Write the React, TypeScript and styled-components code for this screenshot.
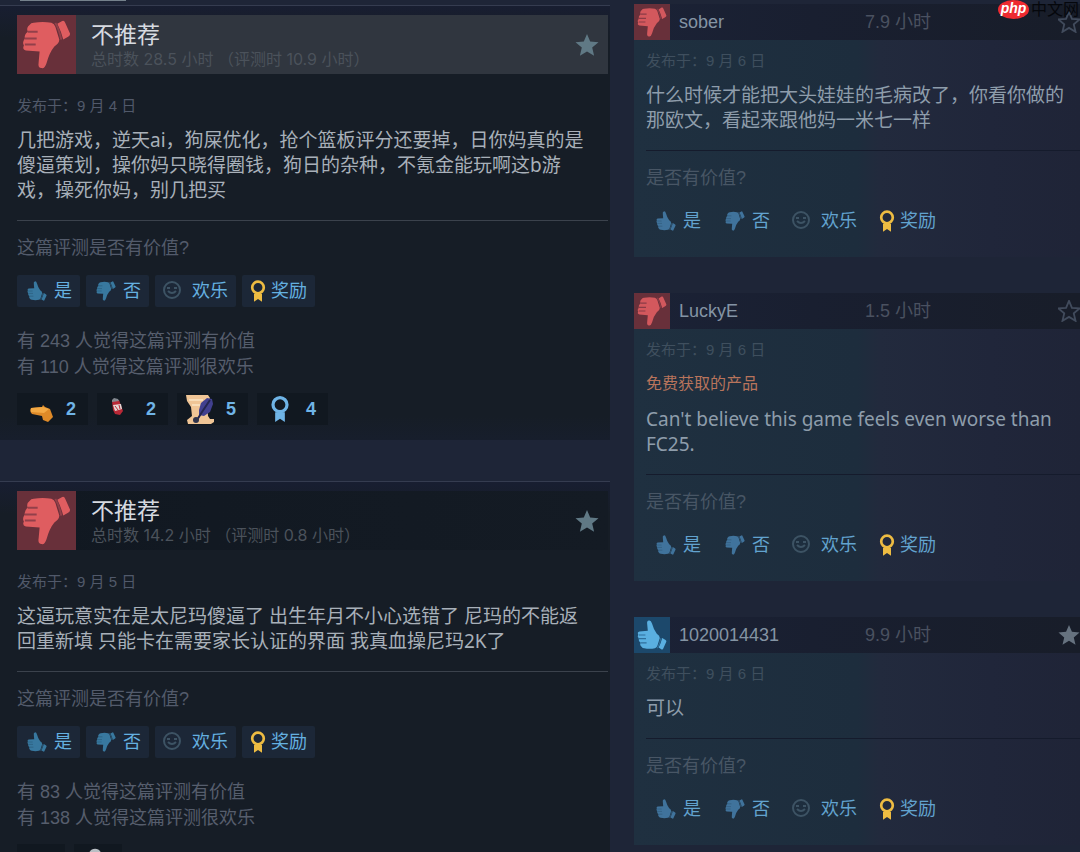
import React from 'react';
import styled, { createGlobalStyle } from 'styled-components';

const sans = '"Liberation Sans", "Noto Sans CJK SC", sans-serif';
const motiva = '"Noto Sans", "Noto Sans CJK SC", sans-serif';
const wide = 'Inter, "Noto Sans CJK SC", sans-serif';

const GlobalStyle = createGlobalStyle`
  * { box-sizing: border-box; }
  body { margin: 0; background: #1e2537; font-family: ${sans}; }
  h2, p { margin: 0; font-weight: 400; }
`;

const Page = styled.main`
  position: relative;
  display: grid;
  grid-template-columns: minmax(0, 610fr) minmax(0, 446fr);
  column-gap: 24px;
  height: 100vh;
  overflow: hidden;
  background: #1e2537;
`;

const MainColumn = styled.div`
  display: flex;
  flex-direction: column;
  gap: 41px;
`;

const TabEdge = styled.div`
  width: 106px;
  height: 1px;
  margin: 0 0 -37px 20px;
  background: #75828c;
`;

const SideColumn = styled.div`
  display: flex;
  flex-direction: column;
  gap: 36px;
  padding-top: 4px;
`;

const Review = styled.article`
  flex: none;
  padding: 9px 2px 15px 17px;
  border-top: 1px solid #353c50;
  background: linear-gradient(#181e31, #161d26 32px, #161d26 calc(100% - 24px), #171e2c);
`;

const Header = styled.header<{ $hover?: boolean }>`
  display: flex;
  align-items: center;
  height: 59px;
  padding-right: 9px;
  background: ${p => (p.$hover ? '#30363f' : 'linear-gradient(90deg, #111821, #141b24)')};
`;

const Verdict = styled.span<{ $size: number; $up?: boolean }>`
  display: flex;
  flex: none;
  width: ${p => p.$size}px;
  height: ${p => p.$size}px;
  background: ${p => (p.$up ? '#1c486b' : '#68303a')};
`;

const Heading = styled.div`
  flex: 1;
  padding-left: 15px;
`;

const Title = styled.h2`
  font: 23px/28px ${motiva};
  color: #d6dae0;
`;

const Hours = styled.p`
  font: 16px/22px ${wide};
  color: #4b525b;
`;

const Posted = styled.p<{ $dim?: boolean }>`
  font-size: 15px;
  line-height: 20px;
  color: ${p => (p.$dim ? '#3f4f5e' : '#51596a')};
`;

const MainPosted = styled(Posted)`
  padding-top: 22px;
`;

const Body = styled.p<{ $side?: boolean }>`
  font: 19px/25px ${motiva};
  color: ${p => (p.$side ? '#8e9dab' : '#a8b0b9')};
`;

const MainBody = styled(Body)`
  padding: 12px 16px 17px 0;
`;

const Question = styled.p<{ $side?: boolean }>`
  border-top: 1px solid ${p => (p.$side ? '#151b2c' : '#3b424c')};
  padding: 15px 0;
  font-size: 18px;
  line-height: 24px;
  color: ${p => (p.$side ? '#485665' : '#535b6b')};
`;

const Votes = styled.div`
  display: flex;
  gap: 6px;
`;

const VoteButton = styled.button<{ $flat?: boolean; $w: number }>`
  display: flex;
  align-items: center;
  justify-content: space-between;
  width: ${p => p.$w}px;
  height: 32px;
  padding: 0 8px;
  border: 0;
  border-radius: 2px;
  background: ${p => (p.$flat ? 'transparent' : '#1c2737')};
  font: 18px/24px ${sans};
  color: ${p => (p.$flat ? '#62a3cf' : '#64b0e0')};
  cursor: pointer;
`;

const Counts = styled.p`
  padding: 21px 0 13px;
  font-size: 18px;
  line-height: 26px;
  color: #565e6d;
`;

const Awards = styled.div`
  display: flex;
  gap: 9px;
`;

const Award = styled.div<{ $single?: boolean }>`
  display: flex;
  align-items: center;
  justify-content: space-between;
  width: ${p => (p.$single ? 48 : 71)}px;
  height: 32px;
  padding: 0 12px 0 8px;
  background: #111820;
  font: bold 18px/24px ${sans};
  color: #6fb4e6;
`;

const Card = styled.article`
  background: linear-gradient(90deg, #1f3040, #1d2d3d 50%, #222a3d 55%, #20263a 80%, #1f2437);
`;

const CardHeader = styled.header`
  display: grid;
  grid-template-columns: 36px 195px 1fr 22px;
  align-items: center;
  height: 36px;
  background: linear-gradient(90deg, #1b2236, #191f30 40%, #181d29);
  font-size: 18px;
  line-height: 20px;
`;

const Author = styled.a`
  padding-left: 9px;
  color: #8494a4;
  text-decoration: none;
`;

const CardHours = styled.span`
  color: #4a5160;
`;

const CardContent = styled.div`
  display: flex;
  flex-direction: column;
  padding: 11px 0 20px 12px;
`;

const Free = styled.p`
  padding-top: 13px;
  font-size: 16px;
  line-height: 22px;
  color: #b8745c;
`;

const CardBody = styled(Body)`
  padding: 12px 0 17px;
`;

const Watermark = styled.div`
  position: absolute;
  top: 0;
  right: 0;
  display: flex;
  gap: 2px;
  padding-right: 1px;
  font: 16px/20px ${sans};
  color: #05070c;
`;

const Php = styled.span`
  width: 31px;
  height: 19px;
  border-radius: 50%;
  background: #ee2a30;
  font: italic bold 14px/17px ${sans};
  text-align: center;
  color: #fff;
`;

function Thumb({ up, size, color, line }: { up?: boolean; size: number; color: string; line: string }) {
  return (
    <svg width={size} height={size} viewBox="0 0 60 60" aria-hidden="true">
      <g transform={up ? 'matrix(1 0 0 -1 0 60)' : undefined}>
        <path
          fill={color}
          d="M17 8Q26 6 35 8Q38 9 39 12L43 25Q43 29 38 32Q33 38 30 49Q28 55 25 54Q21 54 22 48L23 37L9 36Q5 35 7 31Q5 28 8 24Q7 20 11 17Q9 13 13 10Q14 8 17 8Z"
        />
        <path fill={color} d="M41 9L46 6Q48 5 49 8L54 19Q54 21 52 22L47 25Q45 17 41 9Z" />
        <path fill="none" stroke={line} strokeWidth="2" d="M11 17H21M8 24H20M8 30H19M39 8Q43 15 45 25" />
      </g>
    </svg>
  );
}

function Smile() {
  return (
    <svg width="20" height="20" viewBox="0 0 20 20" fill="none" stroke="#3d5364" strokeWidth="2" aria-hidden="true">
      <circle cx="9" cy="9" r="8" />
      <path d="M4 7h3M11 7h3M5 10q4 4 8 0" />
    </svg>
  );
}

function Ribbon({ color, w, h }: { color: string; w: number; h: number }) {
  return (
    <svg width={w} height={h} viewBox="0 0 18 26" aria-hidden="true">
      <circle cx="9" cy="9" r="6.500" fill="none" stroke={color} strokeWidth="3" />
      <path fill={color} d="M4.500 16h9v9l-4.500-3-4.500 3z" />
    </svg>
  );
}

function Star({ filled, size, color }: { filled?: boolean; size: number; color: string }) {
  return (
    <svg width={size} height={size} viewBox="0 0 24 24" aria-hidden="true">
      <path
        fill={filled ? color : 'none'}
        stroke={color}
        strokeWidth={filled ? 0 : 2}
        d="M12 1l3.200 7.500 8.300.7-6.300 5.400 1.900 8.100L12 18.400l-7.100 4.300 1.900-8.100L.5 9.200l8.300-.7z"
      />
    </svg>
  );
}

function VoteRow({ flat }: { flat?: boolean }) {
  const blue = flat ? '#40739c' : '#38789f';
  const line = flat ? '#335e80' : '#2c5f80';
  return (
    <Votes>
      <VoteButton type="button" $flat={flat} $w={63}><Thumb up size={24} color={blue} line={line} />是</VoteButton>
      <VoteButton type="button" $flat={flat} $w={63}><Thumb size={24} color={blue} line={line} />否</VoteButton>
      <VoteButton type="button" $flat={flat} $w={81}><Smile />欢乐</VoteButton>
      <VoteButton type="button" $flat={flat} $w={73}><Ribbon color="#eebc42" w={16} h={24} />奖励</VoteButton>
    </Votes>
  );
}

function Gun() {
  return (
    <svg width="30" height="28" viewBox="0 0 30 28" aria-hidden="true">
      <path fill="#de8a28" d="M6 13L17 12 18 10 20 12 25 14 28 22 23 27 18 25 17 21 7 19Q4 16 6 13Z" />
      <path fill="#f3a944" d="M6 13l12-1 6 2-5 4-13-1z" />
    </svg>
  );
}

function Can() {
  return (
    <svg width="26" height="26" viewBox="0 0 26 26" aria-hidden="true">
      <path fill="#b92836" d="M7 5l7-1 4 11-3 4-5-1-2-4z" />
      <path fill="#e4d8d6" d="M8 9l8-1 1 5-7 2z" />
      <path fill="none" stroke="#b92836" strokeWidth="1" d="M10 10l3 4M14 9l1 4" />
      <path fill="#83888f" d="M7 4l2-2 4 1 1 2-7 1z" />
    </svg>
  );
}

function Scroll() {
  return (
    <svg width="30" height="30" viewBox="0 0 30 30" aria-hidden="true">
      <path fill="#f0c596" d="M1 1h22l2 3-3 5 1 13 2 3h4v3l-3 2H3l-1-4 5-4-1-9-4-6z" />
      <path fill="#f8ddb9" d="M4 5h14v2H4zM7 10h8v2H7z" />
      <path fill="#41408f" d="M14 16l2-7 6-5 5 1 1 5-3 8-6 4-5-1z" />
      <path fill="none" stroke="#242650" strokeWidth="2" d="M25 6l-8 12-5 8" />
      <circle cx="11" cy="26" r="3" fill="#30344b" />
    </svg>
  );
}

function Jester() {
  return (
    <svg width="30" height="30" viewBox="0 0 30 30" aria-hidden="true">
      <path fill="#b9bfc4" d="M6 14Q7 3 14 3T22 14L18 24H10z" />
    </svg>
  );
}

interface ReviewData {
  hover?: boolean;
  hours: string;
  date: string;
  text: string;
  helpful: number;
  funny: number;
  awards: React.ReactNode;
}

function MainReview({ hover, hours, date, text, helpful, funny, awards }: ReviewData) {
  return (
    <Review>
      <Header $hover={hover}>
        <Verdict $size={59}><Thumb size={59} color="#df5d60" line="#92404a" /></Verdict>
        <Heading>
          <Title>不推荐</Title>
          <Hours>{hours}</Hours>
        </Heading>
        <Star filled size={24} color="#607985" />
      </Header>
      <MainPosted>发布于：{date}</MainPosted>
      <MainBody>{text}</MainBody>
      <Question>这篇评测是否有价值?</Question>
      <VoteRow />
      <Counts>
        有 {helpful} 人觉得这篇评测有价值<br />
        有 {funny} 人觉得这篇评测很欢乐
      </Counts>
      <Awards>{awards}</Awards>
    </Review>
  );
}

interface CardData {
  author: string;
  hours: string;
  up?: boolean;
  free?: boolean;
  text: string;
}

function SideReview({ author, hours, up, free, text }: CardData) {
  return (
    <Card>
      <CardHeader>
        <Verdict $size={36} $up={up}>
          <Thumb size={36} up={up} color={up ? '#5aafe0' : '#d3585d'} line={up ? '#2f6f9b' : '#8a3b46'} />
        </Verdict>
        <Author href="#">{author}</Author>
        <CardHours>{hours} 小时</CardHours>
        <Star filled={up} size={22} color={up ? '#66727f' : '#414b5c'} />
      </CardHeader>
      <CardContent>
        <Posted $dim>发布于：9 月 6 日</Posted>
        {free && <Free>免费获取的产品</Free>}
        <CardBody $side>{text}</CardBody>
        <Question $side>是否有价值?</Question>
        <VoteRow flat />
      </CardContent>
    </Card>
  );
}

export default function App() {
  return (
    <>
      <GlobalStyle />
      <Page>
        <MainColumn>
          <TabEdge />
          <MainReview
            hover
            hours="总时数 28.5 小时 （评测时 10.9 小时）"
            date="9 月 4 日"
            text="几把游戏，逆天ai，狗屎优化，抢个篮板评分还要掉，日你妈真的是傻逼策划，操你妈只晓得圈钱，狗日的杂种，不氪金能玩啊这b游戏，操死你妈，别几把买"
            helpful={243}
            funny={110}
            awards={
              <>
                <Award><Gun />2</Award>
                <Award><Can />2</Award>
                <Award><Scroll />5</Award>
                <Award><Ribbon color="#6fb4e6" w={30} h={28} />4</Award>
              </>
            }
          />
          <MainReview
            hours="总时数 14.2 小时 （评测时 0.8 小时）"
            date="9 月 5 日"
            text="这逼玩意实在是太尼玛傻逼了 出生年月不小心选错了 尼玛的不能返回重新填 只能卡在需要家长认证的界面 我真血操尼玛2K了"
            helpful={83}
            funny={138}
            awards={
              <>
                <Award $single />
                <Award $single><Jester /></Award>
              </>
            }
          />
        </MainColumn>
        <SideColumn>
          <SideReview author="sober" hours="7.9" text="什么时候才能把大头娃娃的毛病改了，你看你做的那欧文，看起来跟他妈一米七一样" />
          <SideReview author="LuckyE" hours="1.5" free text="Can't believe this game feels even worse than FC25." />
          <SideReview author="1020014431" hours="9.9" up text="可以" />
        </SideColumn>
        <Watermark><Php>php</Php>中文网</Watermark>
      </Page>
    </>
  );
}
